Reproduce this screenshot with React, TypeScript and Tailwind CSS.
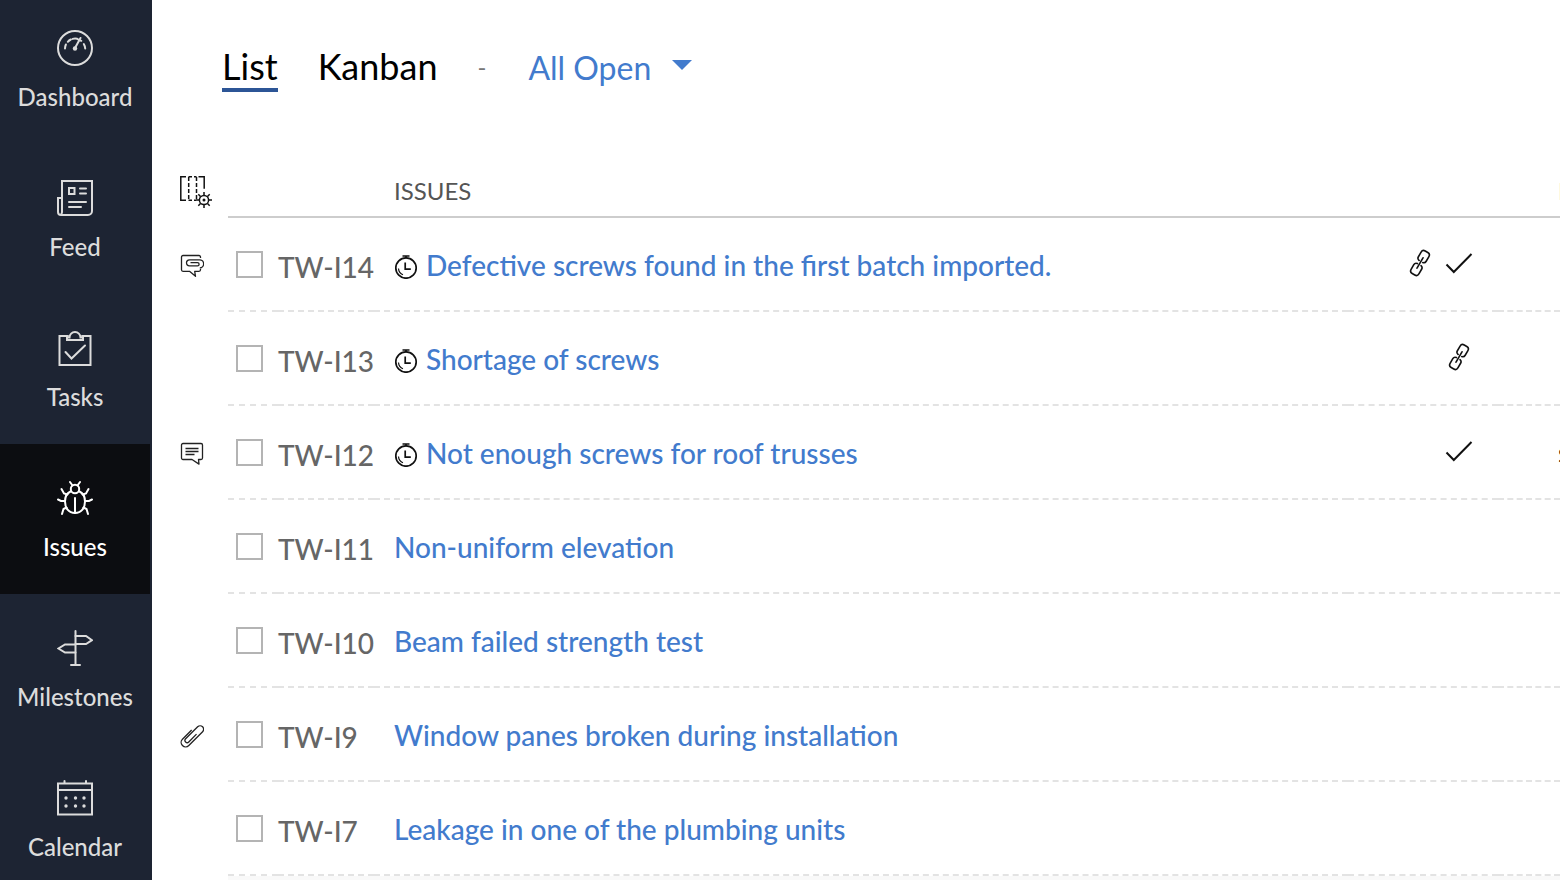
import type { ReactNode } from 'react'

type NavItem = { label: string; icon: ReactNode; active?: boolean }

const navItems: NavItem[] = [
  {
    label: 'Dashboard',
    icon: (
      <>
        <circle cx="18" cy="18" r="17" />
        <path d="M8 18.500a10 10 0 0 1 .9-4M10.800 11.800a10 10 0 0 1 3-2.300M15.600 8.900a10 10 0 0 1 4.600-.1M26.800 14a10 10 0 0 1 1.400 4.500M18 18l5.500-10M20 8.800l4.300 2" />
        <circle cx="18" cy="18.500" r="2.200" fill="currentColor" stroke="none" />
      </>
    ),
  },
  {
    label: 'Feed',
    icon: (
      <>
        <path d="M5 31V1h30v30a4 4 0 0 1-4 4H4a3 3 0 0 1-3-3V18h4M5 18v14a3 3 0 0 1-2 3" />
        <path d="M12 8h5.500v6H12zM23 8.500h6M23 13.500h6M12 22h17M12 27h12" />
      </>
    ),
  },
  {
    label: 'Tasks',
    icon: (
      <>
        <path d="M11 6H2.500v29h31V6H25" />
        <path d="M10 10V7.500h2.500a5.500 5.500 0 0 1 11 0H26V10zM8.500 22l6 6.500L28 15.500" />
      </>
    ),
  },
  {
    label: 'Issues',
    active: true,
    icon: (
      <>
        <path d="M13.500 11.500C9.800 13.200 8 17 8 21.500 8 28 11.500 33 18 33s10-5 10-11.500c0-4.500-1.800-8.300-5.500-10" />
        <circle cx="18" cy="9" r="4.200" />
        <path d="M18 18v15M15.500 5.500L13 2M20.500 5.500L23 2M10.500 14.500L7 13.500 4.500 9M25.500 14.500l3.500-1L31.500 9M8 21H4l-3-1.500M28 21h4l3-1.500M9.500 27.500L6.500 29 5 34M26.500 27.500l3 1.500L31 34" />
      </>
    ),
  },
  {
    label: 'Milestones',
    icon: (
      <>
        <path d="M18.500 1v34M14 35h9" />
        <path d="M18.500 6H29l6 4.200-6 3.800H18.500M18.500 14.500H8L1.500 18.500 8 22.500h10.500" />
      </>
    ),
  },
  {
    label: 'Calendar',
    icon: (
      <>
        <path d="M1 3.500h34v31H1zM1 10h34M7.500 1v2.500M29 1v2.500" />
        <g fill="currentColor" stroke="none">
          <circle cx="9" cy="18" r="1.700" />
          <circle cx="18.500" cy="18" r="1.700" />
          <circle cx="27" cy="18" r="1.700" />
          <circle cx="9" cy="26" r="1.700" />
          <circle cx="18.500" cy="26" r="1.700" />
          <circle cx="27" cy="26" r="1.700" />
        </g>
      </>
    ),
  },
]

type Issue = {
  id: string
  title: string
  timer?: boolean
  marker?: 'discussion' | 'comment' | 'clip'
  linked?: boolean
  done?: boolean
  extra?: string
}

const issues: Issue[] = [
  { id: 'TW-I14', title: 'Defective screws found in the first batch imported.', timer: true, marker: 'discussion', linked: true, done: true },
  { id: 'TW-I13', title: 'Shortage of screws', timer: true, linked: true },
  { id: 'TW-I12', title: 'Not enough screws for roof trusses', timer: true, marker: 'comment', done: true, extra: 's' },
  { id: 'TW-I11', title: 'Non-uniform elevation' },
  { id: 'TW-I10', title: 'Beam failed strength test' },
  { id: 'TW-I9', title: 'Window panes broken during installation', marker: 'clip' },
  { id: 'TW-I7', title: 'Leakage in one of the plumbing units' },
]

const markers: Record<'discussion' | 'comment' | 'clip', ReactNode> = {
  discussion: (
    <>
      <path d="M20.500 4V3a1.500 1.500 0 0 0-1.500-1.500H3A1.500 1.500 0 0 0 1.500 3v12.800a1.500 1.500 0 0 0 1.500 1.500h6.500l6 5-.8-5h4.300a1.500 1.500 0 0 0 1.500-1.500v-.8" />
      <path d="M10.500 8.600h7a1.600 1.600 0 0 1 0 3.200h-8a3 3 0 0 1 0-6h9.800a4 4 0 0 1 .5 8.200" />
    </>
  ),
  comment: (
    <>
      <path d="M3 1.500h18A1.500 1.500 0 0 1 22.500 3v13a1.500 1.500 0 0 1-1.500 1.500h-2.500l.5 4.600-7-4.600H3A1.500 1.500 0 0 1 1.500 16V3A1.500 1.500 0 0 1 3 1.500z" />
      <path d="M5.500 6.500h13M5.500 9.500h13M5.500 12.500h9" />
    </>
  ),
  clip: (
    <path
      transform="translate(12 12) rotate(45)"
      d="M-4.500-4V9a4.500 4.500 0 0 0 9 0v-19.500a3.500 3.500 0 0 0-7 0v17a2.200 2.200 0 0 0 4.400 0v-11"
    />
  ),
}

const ColumnsIcon = () => (
  <svg className="block size-8" viewBox="0 0 32 32" fill="none" stroke="#111" strokeWidth="1.500">
    <path d="M6 .8H.8v23.400H6M18.500 .8h5.700v12" />
    <path d="M8.500 .8h8M8.500 24.200h7.500" strokeDasharray="3.500 2" />
    <path d="M8.700 1v23M16.500 1v23" strokeDasharray="4 2" />
    <circle cx="24" cy="24" r="4.600" />
    <circle cx="24" cy="24" r="1.500" fill="#111" stroke="none" />
    <path d="M24 16v3M24 29v3M16 24h3M29 24h3M18.300 18.300l2.200 2.200M27.500 27.500l2.200 2.200M18.300 29.700l2.200-2.200M27.500 20.500l2.200-2.200" />
  </svg>
)

const TimerIcon = () => (
  <svg className="mt-1 size-6 shrink-0" viewBox="0 0 24 24" fill="none" stroke="#111" strokeWidth="1.700" aria-hidden="true">
    <circle cx="12" cy="13" r="10.200" />
    <path d="M8.500 1h7M12 1v2.200M11.200 7.500v6.700h5.600" />
    <path d="M4.500 13.500c.2 3 2 5.300 4.500 6.200" strokeWidth="1.200" />
  </svg>
)

const LinkIcon = () => (
  <svg className="size-7" viewBox="0 0 28 28" fill="none" stroke="#111" strokeWidth="1.600" strokeLinecap="round" aria-label="Linked">
    <g transform="rotate(30 14 14)">
      <path d="M12 12.200h-.2a2.800 2.800 0 0 1-2.300-2.800V4a3 3 0 0 1 3-3h3a3 3 0 0 1 3 3v5.400a2.800 2.800 0 0 1-2.300 2.800" />
      <path d="M12 15.800h-.2a2.800 2.800 0 0 0-2.300 2.800V24a3 3 0 0 0 3 3h3a3 3 0 0 0 3-3v-5.400a2.800 2.800 0 0 0-2.300-2.800M14 8v12" />
    </g>
  </svg>
)

const CheckIcon = () => (
  <svg className="size-7" viewBox="0 0 28 28" fill="none" stroke="#111" strokeWidth="2" aria-label="Done">
    <path d="M1.500 15.500L8.800 23 26.500 5" />
  </svg>
)

function Sidebar() {
  return (
    <nav className="w-[152px] shrink-0 bg-[#1d2433] pr-0.5">
      {navItems.map((item) => (
        <a
          key={item.label}
          href="#"
          aria-current={item.active ? 'page' : undefined}
          className={
            item.active
              ? 'flex flex-col items-center gap-4 bg-[#0c0d11] pt-9 pb-8 text-2xl leading-[30px] font-medium text-white'
              : 'flex flex-col items-center gap-4 pt-9 pb-8 text-2xl leading-[30px] font-medium text-[#dcdcdc] first:pt-[30px]'
          }
        >
          <svg className="size-9" viewBox="0 0 36 36" fill="none" stroke="currentColor" strokeWidth="2" strokeLinecap="round" aria-hidden="true">
            {item.icon}
          </svg>
          <span>{item.label}</span>
        </a>
      ))}
    </nav>
  )
}

function IssueRow({ issue }: { issue: Issue }) {
  const cell = 'h-[94px] border-b-2 border-dashed border-[#e3e3e3]'
  return (
    <tr>
      <td className="pt-0.5 pl-7">
        {issue.marker && (
          <svg className="block size-6" viewBox="0 0 24 24" fill="none" stroke="#222" strokeWidth="1.300" strokeLinejoin="round" aria-label={issue.marker}>
            {markers[issue.marker]}
          </svg>
        )}
      </td>
      <td className={`${cell} pl-2`}>
        <input
          type="checkbox"
          aria-label={`Select ${issue.id}`}
          className="block size-[27px] appearance-none border-2 border-[#b4b4b4] bg-white"
        />
      </td>
      <td className={`${cell} pt-1.5 text-[28px] leading-9 font-medium whitespace-nowrap text-[#666]`}>{issue.id}</td>
      <td className={`${cell} pt-0.5 pl-5`}>
        <a href="#" className="flex items-center gap-2 text-[28px] leading-9 font-medium text-[#427bcd]">
          {issue.timer && <TimerIcon />}
          <span>{issue.title}</span>
        </a>
      </td>
      <td className={`${cell} pr-[25px] pb-0.5`}>
        <div className="flex items-center justify-end gap-[11px]">
          {issue.linked && <LinkIcon />}
          {issue.done && <CheckIcon />}
        </div>
      </td>
      <td className={`${cell} overflow-hidden pl-[60px] text-[28px] leading-9 text-black`}>{issue.extra}</td>
    </tr>
  )
}

export default function App() {
  return (
    <div className="flex h-screen overflow-hidden bg-white font-['Lato',sans-serif]">
      <Sidebar />
      <main className="min-w-0 flex-1">
        <header className="flex items-start pt-11 pl-[70px]">
          <a href="#" className="border-b-4 border-[#2c5596] text-4xl leading-[44px] text-black">
            List
          </a>
          <a href="#" className="ml-10 text-4xl leading-[44px] text-black">
            Kanban
          </a>
          <span className="ml-10 text-2xl leading-[46px] text-[#777]">-</span>
          <button type="button" className="ml-[42px] flex items-center gap-[21px] text-[32px] leading-[48px] text-[#427bcd]">
            All Open
            <svg className="mb-1.5 h-[10px] w-5" viewBox="0 0 20 10" fill="currentColor" aria-hidden="true">
              <path d="M0 0h20L10 10z" />
            </svg>
          </button>
        </header>
        <table className="mt-[74px] w-full table-fixed border-separate border-spacing-0 text-left">
          <colgroup>
            <col className="w-[76px]" />
            <col className="w-[50px]" />
            <col className="w-[96px]" />
            <col />
            <col className="w-[150px]" />
            <col className="w-[62px]" />
          </colgroup>
          <thead>
            <tr>
              <th className="pl-7">
                <button type="button" aria-label="Configure columns" className="block">
                  <ColumnsIcon />
                </button>
              </th>
              <th className="h-[52px] border-b-2 border-[#cdcdcd]" />
              <th className="border-b-2 border-[#cdcdcd]" />
              <th className="border-b-2 border-[#cdcdcd] pl-5 text-2xl font-normal text-[#555]">ISSUES</th>
              <th className="border-b-2 border-[#cdcdcd]" />
              <th className="overflow-hidden border-b-2 border-[#cdcdcd] pl-[60px] text-2xl font-normal text-[#555]">R</th>
            </tr>
          </thead>
          <tbody>
            {issues.map((issue) => (
              <IssueRow key={issue.id} issue={issue} />
            ))}
            <tr>
              <td />
              <td colSpan={5} className="h-[94px] bg-[#f9f9f9]" />
            </tr>
          </tbody>
        </table>
      </main>
    </div>
  )
}
